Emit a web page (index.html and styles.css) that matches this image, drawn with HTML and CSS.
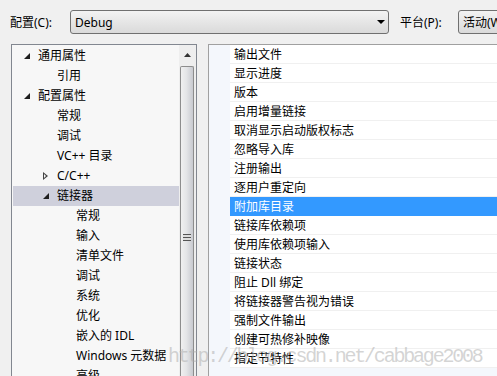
FILE: index.html
```html
<!DOCTYPE html>
<html lang="zh-CN">
<head>
    <meta charset="UTF-8">
    <title>属性页</title>
    <link rel="stylesheet" href="styles.css">
</head>
<body>

    <div class="topbar">
        <label class="top-label">配置(C):</label>
        <div class="combo combo-config">
            <span>Debug</span>
            <svg class="combo-arrow" width="8" height="4" viewBox="0 0 8 4"><polygon points="0,0 8,0 4,4" fill="#000"/></svg>
        </div>
        <label class="top-label platform-label">平台(P):</label>
        <div class="combo combo-platform">
            <span>活动(Win32)</span>
        </div>
    </div>

    <div class="main">
        <!-- Left tree -->
        <div class="tree-panel">
            <ul class="tree">
                <li class="node lv0"><span class="toggle open"></span>通用属性</li>
                <li class="node lv1"><span class="toggle"></span>引用</li>
                <li class="node lv0"><span class="toggle open"></span>配置属性</li>
                <li class="node lv1"><span class="toggle"></span>常规</li>
                <li class="node lv1"><span class="toggle"></span>调试</li>
                <li class="node lv1"><span class="toggle"></span>VC++ 目录</li>
                <li class="node lv1"><span class="toggle closed"></span>C/C++</li>
                <li class="node lv1 selected"><span class="toggle open"></span>链接器</li>
                <li class="node lv2"><span class="toggle"></span>常规</li>
                <li class="node lv2"><span class="toggle"></span>输入</li>
                <li class="node lv2"><span class="toggle"></span>清单文件</li>
                <li class="node lv2"><span class="toggle"></span>调试</li>
                <li class="node lv2"><span class="toggle"></span>系统</li>
                <li class="node lv2"><span class="toggle"></span>优化</li>
                <li class="node lv2"><span class="toggle"></span>嵌入的 IDL</li>
                <li class="node lv2"><span class="toggle"></span>Windows 元数据</li>
                <li class="node lv2"><span class="toggle"></span>高级</li>
            </ul>
            <div class="scrollbar">
                <div class="scroll-btn">
                    <svg width="7" height="4" viewBox="0 0 7 4"><polygon points="3.5,0 7,4 0,4" fill="#333"/></svg>
                </div>
                <div class="thumb">
                    <span class="grip"></span>
                </div>
            </div>
        </div>

        <!-- Right property list -->
        <div class="prop-panel">
            <div class="prop-gutter"></div>
            <ul class="props">
                <li>输出文件</li>
                <li>显示进度</li>
                <li>版本</li>
                <li>启用增量链接</li>
                <li>取消显示启动版权标志</li>
                <li>忽略导入库</li>
                <li>注册输出</li>
                <li>逐用户重定向</li>
                <li class="active">附加库目录</li>
                <li>链接库依赖项</li>
                <li>使用库依赖项输入</li>
                <li>链接状态</li>
                <li>阻止 Dll 绑定</li>
                <li>将链接器警告视为错误</li>
                <li>强制文件输出</li>
                <li>创建可热修补映像</li>
                <li>指定节特性</li>
            </ul>
        </div>
    </div>

    <div class="watermark">http://blog.csdn.net/cabbage2008</div>

</body>
</html>
```

FILE: styles.css
```css
body {
    margin: 0;
    width: 497px;
    height: 376px;
    overflow: hidden;
    background: #f0f0f0;
    font-family: "Noto Sans", "Noto Sans CJK SC", sans-serif;
    font-size: 12px;
    color: #000;
    position: relative;
}

ul {
    list-style: none;
    margin: 0;
    padding: 0;
}

/* Top bar */
.topbar {
    display: flex;
    align-items: center;
    height: 44px;
    padding-left: 10px;
    box-sizing: border-box;
    white-space: nowrap;
}

.top-label {
    width: 60px;
    flex-shrink: 0;
}

.platform-label {
    width: 58px;
    margin-left: 11px;
}

.combo {
    height: 24px;
    box-sizing: border-box;
    border: 1px solid #707070;
    border-radius: 3px;
    background: linear-gradient(#f3f3f3, #e6e6e6 50%, #dadada);
    display: flex;
    align-items: center;
    padding-left: 4px;
    position: relative;
    flex-shrink: 0;
}

.combo-config {
    width: 319px;
}

.combo-platform {
    width: 120px;
}

.combo-arrow {
    position: absolute;
    right: 3px;
    top: 9px;
}

/* Main area */
.main {
    display: flex;
    height: 332px;
}

.tree-panel {
    width: 186px;
    margin-left: 11px;
    border: 1px solid #828790;
    border-bottom: none;
    background: #f7f7f7;
    display: flex;
    box-sizing: border-box;
    flex-shrink: 0;
}

.tree {
    flex: 1;
    padding: 1px 0 0 1px;
}

.node {
    height: 20px;
    line-height: 20px;
    display: flex;
    align-items: center;
    white-space: nowrap;
}

.lv0 { padding-left: 6px; }
.lv1 { padding-left: 25px; }
.lv2 { padding-left: 44px; }

.selected {
    background: #cfd0dc;
}

.toggle {
    width: 19px;
    height: 20px;
    position: relative;
    flex-shrink: 0;
}

.toggle.open::before {
    content: "";
    position: absolute;
    left: 5px;
    top: 7px;
    border-style: solid;
    border-width: 0 0 6px 6px;
    border-color: transparent transparent #1e1e1e transparent;
}

.toggle.closed::before {
    content: "";
    position: absolute;
    left: 5px;
    top: 6px;
    border-style: solid;
    border-width: 4px 0 4px 5px;
    border-color: transparent transparent transparent #444;
}

.toggle.closed::after {
    content: "";
    position: absolute;
    left: 6px;
    top: 8px;
    border-style: solid;
    border-width: 2px 0 2px 2px;
    border-color: transparent transparent transparent #f7f7f7;
}

/* Scrollbar */
.scrollbar {
    width: 17px;
    padding: 2px 2px 0 1px;
    box-sizing: border-box;
    background: #eeeeee;
    display: flex;
    flex-direction: column;
}

.scroll-btn {
    height: 16px;
    display: flex;
    align-items: center;
    justify-content: center;
}

.thumb {
    flex: 1;
    margin-top: 3px;
    border: 1px solid #8d8d8d;
    border-bottom: none;
    border-radius: 2px 2px 0 0;
    background: linear-gradient(to right, #f0f0f0, #e4e5e7 45%, #c8cad0);
    display: flex;
    justify-content: center;
    padding-top: 167px;
}

.grip {
    width: 8px;
    height: 7px;
    background: repeating-linear-gradient(#555 0 1px, #ddd 1px 3px);
}

/* Property list */
.prop-panel {
    flex: 1;
    margin-left: 11px;
    border-top: 1px solid #a0a0a0;
    border-left: 1px solid #a0a0a0;
    background: #f4f7fc;
    display: flex;
}

.prop-gutter {
    width: 21px;
}

.props {
    flex: 1;
}

.props li {
    height: 18px;
    line-height: 20px;
    padding-left: 4px;
    background: #fff;
    border-bottom: 1px solid #f0f0f0;
    white-space: nowrap;
    overflow: hidden;
}

.props li.active {
    background: #3399ff;
    color: #fff;
    border-bottom-color: #3399ff;
}

/* Blog watermark */
.watermark {
    position: absolute;
    left: 168px;
    top: 347px;
    font-family: "Liberation Mono", monospace;
    font-size: 20px;
    letter-spacing: -2.2px;
    line-height: 20px;
    color: rgba(170, 170, 170, 0.5);
    white-space: nowrap;
}
```
